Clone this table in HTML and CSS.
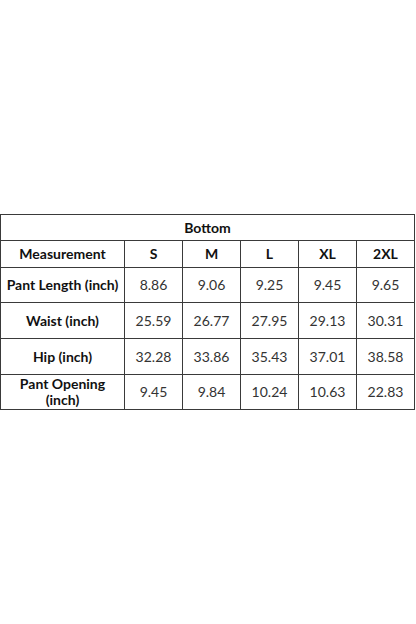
FILE: index.html
```html
<!DOCTYPE html>
<html lang="en">
<head>
    <meta charset="UTF-8">
    <meta name="viewport" content="width=device-width, initial-scale=1.0">
    <title>Size Chart - Bottom</title>
    <link rel="stylesheet" href="styles.css">
</head>
<body>
    <div class="page">
        <table class="size-table">
            <colgroup>
                <col class="col-label">
                <col class="col-size">
                <col class="col-size">
                <col class="col-size">
                <col class="col-size">
                <col>
            </colgroup>
            <tr>
                <th colspan="6" class="title">Bottom</th>
            </tr>
            <tr class="head-row">
                <th>Measurement</th>
                <th>S</th>
                <th>M</th>
                <th>L</th>
                <th>XL</th>
                <th>2XL</th>
            </tr>
            <tr class="row-a">
                <th>Pant Length (inch)</th>
                <td>8.86</td>
                <td>9.06</td>
                <td>9.25</td>
                <td>9.45</td>
                <td>9.65</td>
            </tr>
            <tr class="row-b">
                <th>Waist (inch)</th>
                <td>25.59</td>
                <td>26.77</td>
                <td>27.95</td>
                <td>29.13</td>
                <td>30.31</td>
            </tr>
            <tr class="row-b">
                <th>Hip (inch)</th>
                <td>32.28</td>
                <td>33.86</td>
                <td>35.43</td>
                <td>37.01</td>
                <td>38.58</td>
            </tr>
            <tr class="row-a">
                <th>Pant Opening<br>(inch)</th>
                <td>9.45</td>
                <td>9.84</td>
                <td>10.24</td>
                <td>10.63</td>
                <td>22.83</td>
            </tr>
        </table>
    </div>
</body>
</html>
```

FILE: styles.css
```css
body {
    margin: 0;
    background: #fff;
    font-family: Lato, "Open Sans", sans-serif;
    color: #333;
}

.page {
    min-height: 100vh;
    display: flex;
    align-items: center;
    box-sizing: border-box;
}

.size-table {
    width: 415px;
    border-collapse: collapse;
    table-layout: fixed;
    font-size: 14px;
}

.col-label {
    width: 124px;
}

.col-size {
    width: 58px;
}

.size-table th,
.size-table td {
    border: 1px solid #3a3a3a;
    text-align: center;
    padding: 0;
    line-height: 16px;
    white-space: nowrap;
}

.size-table th {
    color: #111;
    font-weight: bold;
}

.size-table td {
    color: #333;
}

.title {
    height: 25px;
}

.head-row th {
    height: 26px;
}

.row-a th,
.row-a td {
    height: 34px;
}

.row-b th,
.row-b td {
    height: 35px;
}
```
